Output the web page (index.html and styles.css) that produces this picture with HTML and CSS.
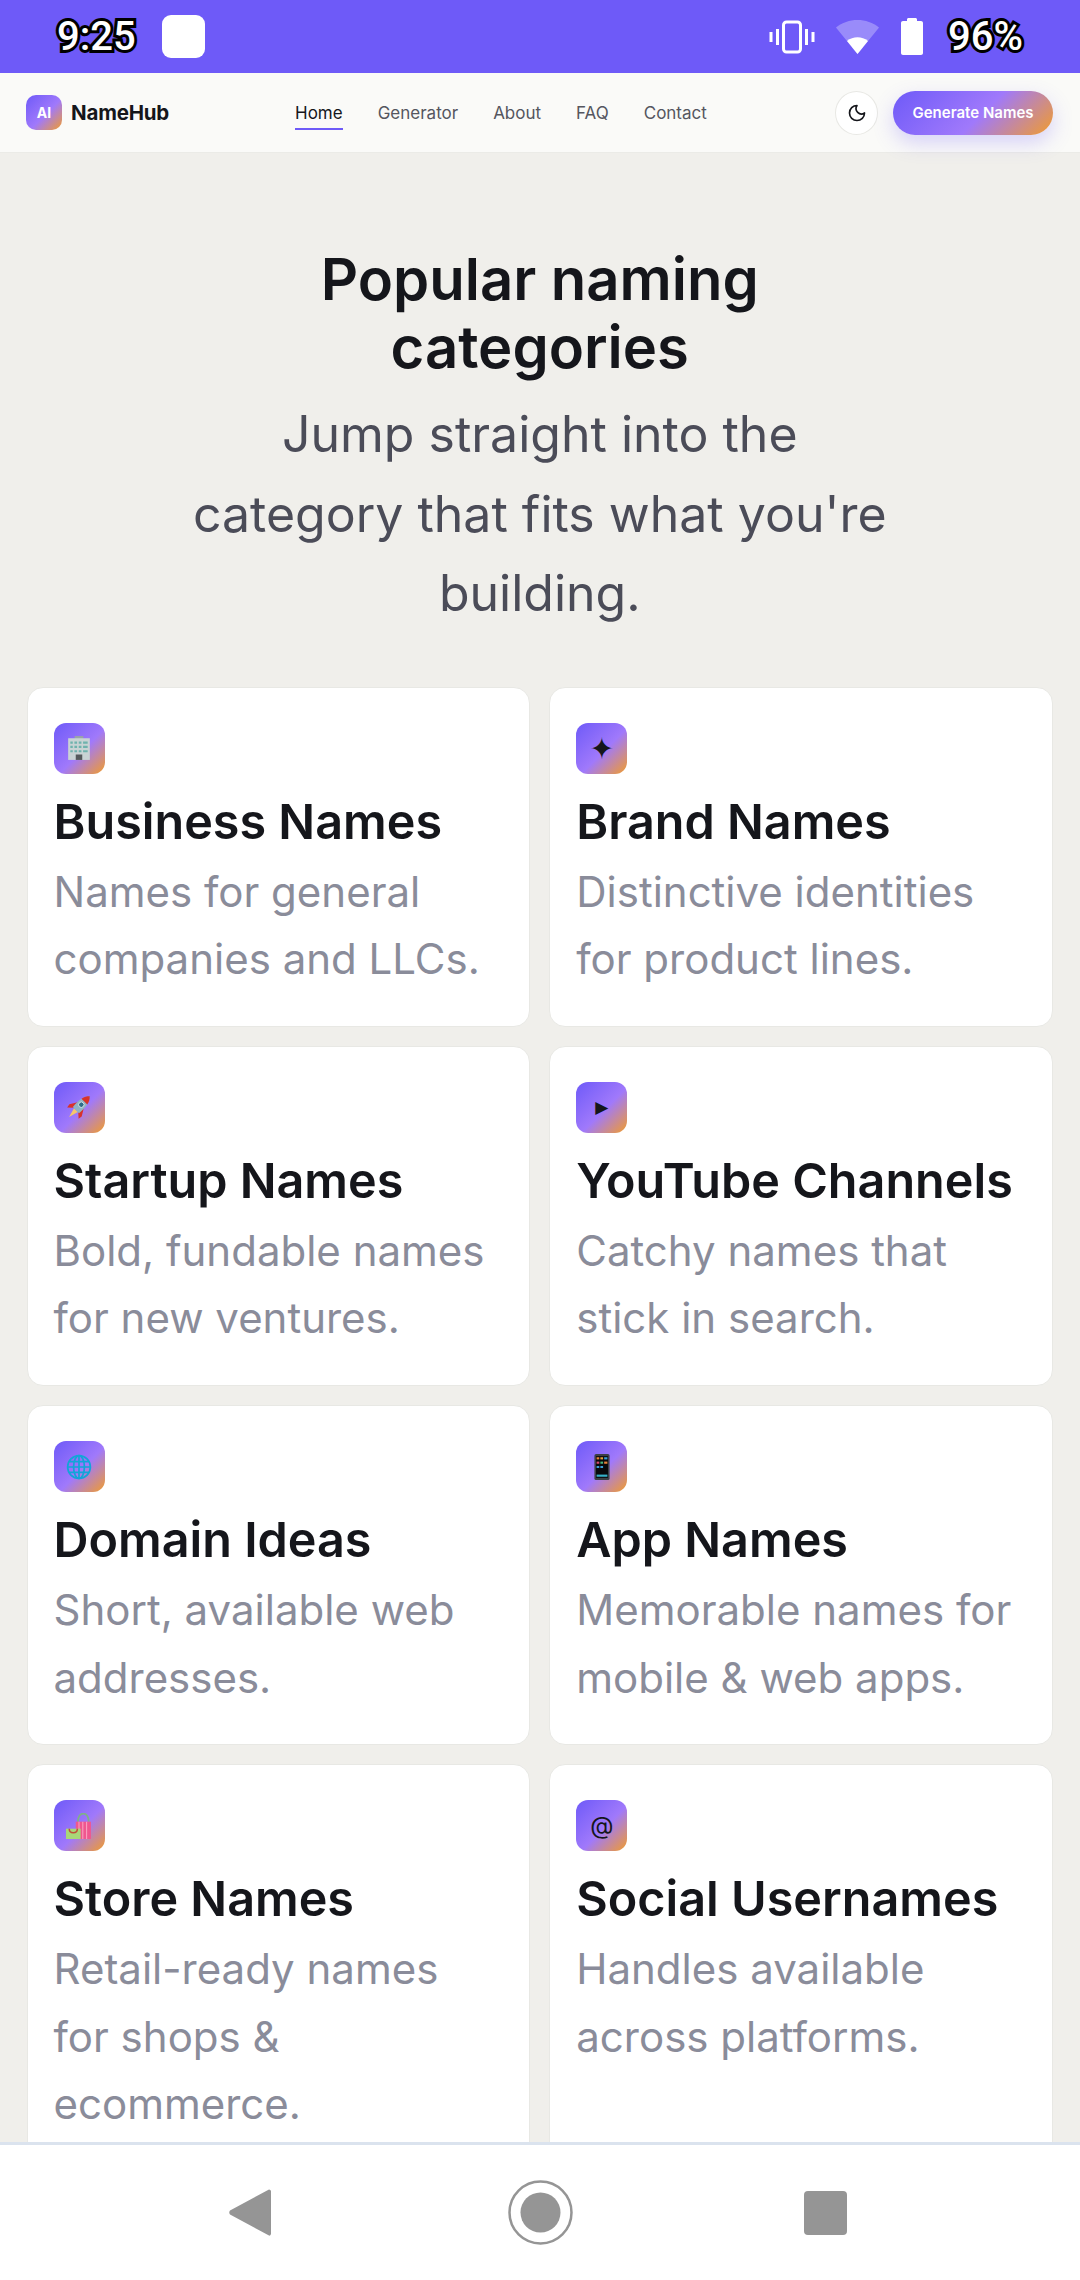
FILE: index.html
```html
<!DOCTYPE html>
<html>
<head>
    <title>NameHub</title>
    <meta charset="UTF-8">
    <link rel="stylesheet" href="styles.css">
</head>
<body>
    <div class="status-bar">
        <span class="status-text time">9:25</span>
        <span class="status-square"></span>
        <div class="status-right">
            <svg class="ic-vibrate" width="46" height="34" viewBox="0 0 46 34" fill="none" stroke="#fff">
                <rect x="14.500" y="2" width="17" height="30" rx="3" stroke-width="3"/>
                <path d="M8.500 9v16M2 12v10M37.500 9v16M44 12v10" stroke-width="3"/>
            </svg>
            <svg class="ic-wifi" width="43" height="34" viewBox="0 0 43 34">
                <path d="M0 7.500C12-2.500 31-2.500 43 7.500L21.500 34Z" fill="#fff" fill-opacity=".3"/>
                <path d="M11 21C17 16 26 16 32 21L21.500 34Z" fill="#fff"/>
            </svg>
            <svg class="ic-battery" width="22" height="37" viewBox="0 0 22 37">
                <path d="M6 3V1.500C6 .7 6.700 0 7.500 0h7C15.300 0 16 .7 16 1.500V3h4c1.100 0 2 .9 2 2v30c0 1.100-.9 2-2 2H2c-1.100 0-2-.9-2-2V5c0-1.100.9-2 2-2Z" fill="#fff"/>
            </svg>
            <span class="status-text percent">96%</span>
        </div>
    </div>

    <header class="top-nav">
        <div class="brand">
            <span class="brand-mark">AI</span>
            <span class="brand-name">NameHub</span>
        </div>
        <nav class="nav-links">
            <a class="active">Home</a>
            <a>Generator</a>
            <a>About</a>
            <a>FAQ</a>
            <a>Contact</a>
        </nav>
        <div class="nav-actions">
            <span class="theme-btn">
                <svg width="20" height="20" viewBox="0 0 24 24" fill="none" stroke="#15161b" stroke-width="2" stroke-linejoin="round">
                    <path d="M12 3a6.500 6.500 0 0 0 9 9 9 9 0 1 1-9-9Z"/>
                </svg>
            </span>
            <a class="cta">Generate Names</a>
        </div>
    </header>

    <main class="content">
        <section class="intro">
            <h2>Popular naming<br>categories</h2>
            <p>Jump straight into the category that fits what you're building.</p>
        </section>

        <div class="grid">
            <div class="card">
                <span class="tile">
                    <svg class="emoji" viewBox="0 0 24 24">
                        <rect x="8" y="1" width="8" height="3" fill="#9aa5a8"/>
                        <rect x="2" y="3" width="20" height="20" fill="#c9d3d4"/>
                        <path d="M4 6h16v2H4zM4 10h16v2H4zM4 14h16v2H4z" fill="#6fb3ad"/>
                        <path d="M7 5v12M11 5v12M15 5v12" stroke="#c9d3d4" stroke-width="1.500"/>
                        <rect x="9" y="18" width="6" height="5" fill="#55595c"/>
                    </svg>
                </span>
                <h3>Business Names</h3>
                <p>Names for general companies and LLCs.</p>
            </div>
            <div class="card">
                <span class="tile glyph">✦</span>
                <h3>Brand Names</h3>
                <p>Distinctive identities for product lines.</p>
            </div>
            <div class="card">
                <span class="tile">
                    <svg class="emoji" viewBox="0 0 24 24">
                        <g transform="rotate(45 12 12)">
                            <path d="M9.500 16h5L12 25Z" fill="#f6c66b"/>
                            <path d="M8.500 9L4 16.500 4.500 20 9 16ZM15.500 9L20 16.500 19.500 20 15 16Z" fill="#d8322a"/>
                            <path d="M12-2C16 2 17 8 16 16H8C7 8 8 2 12-2Z" fill="#8fb4c4"/>
                            <path d="M12-2C14 0 15.200 2 15.800 5H8.200C8.800 2 10 0 12-2Z" fill="#d8322a"/>
                            <circle cx="12" cy="9" r="2.500" fill="#2f6f8a" stroke="#dfe8ec" stroke-width=".8"/>
                        </g>
                    </svg>
                </span>
                <h3>Startup Names</h3>
                <p>Bold, fundable names for new ventures.</p>
            </div>
            <div class="card">
                <span class="tile glyph play">▶</span>
                <h3>YouTube Channels</h3>
                <p>Catchy names that stick in search.</p>
            </div>
            <div class="card">
                <span class="tile">
                    <svg class="emoji" viewBox="0 0 24 24" fill="none" stroke="#12a5d8" stroke-width="1.600">
                        <circle cx="12" cy="12" r="10.500"/>
                        <ellipse cx="12" cy="12" rx="5" ry="10.500"/>
                        <path d="M12 1.500v21M1.500 12h21M3 7h18M3 17h18"/>
                    </svg>
                </span>
                <h3>Domain Ideas</h3>
                <p>Short, available web addresses.</p>
            </div>
            <div class="card">
                <span class="tile">
                    <svg class="emoji" viewBox="0 0 24 24">
                        <rect x="5" y="0" width="14" height="24" rx="1.500" fill="#3b3f45"/>
                        <rect x="6.500" y="2" width="11" height="20" fill="#08090c"/>
                        <path d="M7 3h2.500v2H7z" fill="#e8843a"/>
                        <path d="M10.500 3H13v2h-2.500z" fill="#e4a13a"/>
                        <path d="M14 3h3v2h-3z" fill="#3aa0d8"/>
                        <path d="M7 7h2.500v2H7z" fill="#d84a6a"/>
                        <path d="M10.500 7H13v2h-2.500z" fill="#49b37a"/>
                        <path d="M14 7h3v2h-3z" fill="#e8843a"/>
                        <path d="M7 11h2.500v2H7zM10.500 11H13v2h-2.500z" fill="#3aa0d8"/>
                        <path d="M7 19h10v2H7z" fill="#35b0c8"/>
                    </svg>
                </span>
                <h3>App Names</h3>
                <p>Memorable names for mobile &amp; web apps.</p>
            </div>
            <div class="card">
                <span class="tile">
                    <svg class="emoji" viewBox="0 0 24 24" fill="none">
                        <path d="M11 8c0-10 10-10 10 0" stroke="#7fb08a" stroke-width="1.600"/>
                        <rect x="9" y="8" width="14" height="16" fill="#f0578f"/>
                        <path d="M12 8v16M15.500 8v16M19 8v16" stroke="#f8a0c0" stroke-width="1"/>
                        <rect x="0" y="14.500" width="13.500" height="9.500" fill="#a8d878"/>
                        <path d="M3 14.500c0 5 7.500 5 7.500 0" stroke="#c0503a" stroke-width="1.400"/>
                    </svg>
                </span>
                <h3>Store Names</h3>
                <p>Retail-ready names for shops &amp; ecommerce.</p>
            </div>
            <div class="card">
                <span class="tile glyph at">@</span>
                <h3>Social Usernames</h3>
                <p>Handles available across platforms.</p>
            </div>
        </div>
    </main>

    <footer class="android-nav">
        <svg width="42" height="47" viewBox="0 0 42 47">
            <path d="M40 0.500c1 0 2 .7 2 2v42c0 1.500-1.200 2.500-2 2L1 25.500c-1-1-1-3 0-4Z" fill="#959595"/>
        </svg>
        <svg class="home-btn" width="65" height="65" viewBox="0 0 65 65">
            <circle cx="32.500" cy="32.500" r="31" fill="none" stroke="#959595" stroke-width="2.500"/>
            <circle cx="32.500" cy="32.500" r="20" fill="#959595"/>
        </svg>
        <span class="recents"></span>
    </footer>
</body>
</html>
```

FILE: styles.css
```css
* {
    box-sizing: border-box;
}

html, body {
    margin: 0;
    height: 2280px;
    overflow: hidden;
}

body {
    display: flex;
    flex-direction: column;
    background: #f0efeb;
    font-family: "Inter", "Liberation Sans", sans-serif;
    color: #15161b;
}

/* android status bar */
.status-bar {
    height: 73px;
    flex: none;
    background: #6e5af8;
    display: flex;
    align-items: center;
    padding: 0 57px;
}
.status-text {
    font-family: "Roboto", sans-serif;
    font-size: 40px;
    font-weight: 500;
    color: #fff;
    -webkit-text-stroke: 6px #000;
    paint-order: stroke fill;
    line-height: 1;
}
.status-square {
    width: 43px;
    height: 43px;
    background: #fff;
    border-radius: 9px;
    margin-left: 26px;
}
.status-right {
    margin-left: auto;
    display: flex;
    align-items: center;
}
.ic-wifi {
    margin-left: 21px;
}
.ic-battery {
    margin-left: 22px;
}
.percent {
    margin-left: 25px;
}

/* site header */
.top-nav {
    height: 80px;
    flex: none;
    background: #fafaf8;
    border-bottom: 1px solid #ebebe7;
    display: flex;
    align-items: center;
    padding: 0 27px 0 26px;
}
.brand {
    display: flex;
    align-items: center;
    gap: 9px;
    width: 269px;
}
.brand-mark {
    width: 36px;
    height: 35px;
    border-radius: 10px;
    background: linear-gradient(135deg, #6e5af8, #a079fb 55%, #f29c2b);
    color: #fff;
    font-size: 14px;
    font-weight: 700;
    display: flex;
    align-items: center;
    justify-content: center;
}
.brand-name {
    font-size: 20.500px;
    font-weight: 700;
    letter-spacing: -0.2px;
}
.nav-links {
    display: flex;
    gap: 35px;
    font-size: 17px;
    font-weight: 400;
    color: #55565f;
}
.nav-links a {
    line-height: 20px;
    padding: 7px 0 5px;
    border-bottom: 2px solid transparent;
}
.nav-links a.active {
    color: #15161b;
    border-bottom-color: #6e5af8;
}
.nav-actions {
    margin-left: auto;
    display: flex;
    align-items: center;
    gap: 15px;
}
.theme-btn {
    width: 43px;
    height: 44px;
    border-radius: 50%;
    background: #fff;
    border: 1px solid #e8e8e4;
    display: flex;
    align-items: center;
    justify-content: center;
}
.cta {
    width: 160px;
    height: 44px;
    border-radius: 22px;
    background: linear-gradient(135deg, #6e5af8, #a079fb 55%, #f29c2b);
    box-shadow: 0 8px 20px rgba(110, 90, 248, 0.25);
    color: #fff;
    font-size: 15px;
    font-weight: 600;
    display: flex;
    align-items: center;
    justify-content: center;
}

/* page content */
.content {
    flex: 1;
    min-height: 0;
    overflow: hidden;
    padding: 92px 27px 0 26.500px;
}
.intro {
    text-align: center;
}
.intro h2 {
    margin: 0;
    font-size: 58px;
    font-weight: 600;
    line-height: 68px;
}
.intro p {
    margin: 14px auto 0;
    width: 720px;
    font-size: 50px;
    line-height: 79.500px;
    color: #4b4c58;
}
.grid {
    margin-top: 53px;
    display: grid;
    grid-template-columns: 1fr 1fr;
    gap: 19.300px 19px;
}
.card {
    min-height: 340px;
    background: #fff;
    border: 1px solid #e8e8e4;
    border-radius: 16px;
    padding: 35px 26px 24px;
}
.tile {
    width: 51px;
    height: 51px;
    border-radius: 12px;
    background: linear-gradient(135deg, #6e5af8, #a079fb 55%, #f29c2b);
    display: flex;
    align-items: center;
    justify-content: center;
}
.emoji {
    width: 26px;
    height: 26px;
}
.glyph {
    font-family: "DejaVu Sans", sans-serif;
    font-size: 30px;
    color: #15161b;
}
.play {
    font-size: 17px;
}
.at {
    font-family: "Inter", sans-serif;
    font-size: 24px;
}
.card h3 {
    margin: 18px 0 0;
    font-size: 48.500px;
    font-weight: 600;
    line-height: 60px;
}
.card p {
    margin: 6px 0 0;
    font-size: 42px;
    line-height: 67.500px;
    color: #8a8c9a;
}

/* android nav bar */
.android-nav {
    height: 138px;
    flex: none;
    background: #fff;
    border-top: 3px solid #dbe3ee;
    display: flex;
    align-items: center;
    padding-left: 229px;
}
.home-btn {
    margin-left: 237px;
}
.recents {
    width: 43px;
    height: 44px;
    margin-left: 231px;
    background: #959595;
    border-radius: 4px;
}
```
